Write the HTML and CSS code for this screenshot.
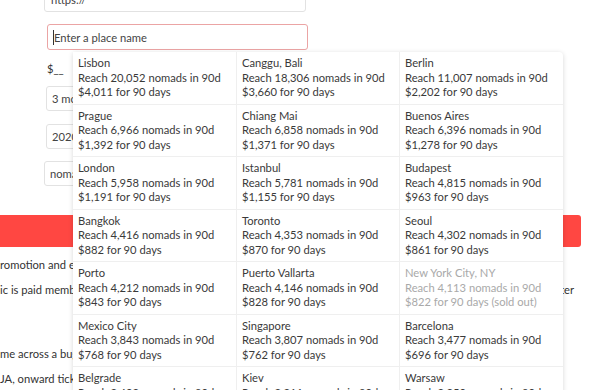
FILE: index.html
```html
<!DOCTYPE html>
<html>
<head>
<meta charset="utf-8">
<link rel="stylesheet" href="styles.css">
</head>
<body>
<div class="page">
  <div class="form">
    <div class="field url-input">https://</div>
    <div class="place-wrap">
      <div class="field place-input"><span class="caret"></span>Enter a place name</div>
      <div class="dropdown">
        <div class="cell"><div>Lisbon</div><div>Reach 20,052 nomads in 90d</div><div>$4,011 for 90 days</div></div>
        <div class="cell"><div>Canggu, Bali</div><div>Reach 18,306 nomads in 90d</div><div>$3,660 for 90 days</div></div>
        <div class="cell"><div>Berlin</div><div>Reach 11,007 nomads in 90d</div><div>$2,202 for 90 days</div></div>
        <div class="cell"><div>Prague</div><div>Reach 6,966 nomads in 90d</div><div>$1,392 for 90 days</div></div>
        <div class="cell"><div>Chiang Mai</div><div>Reach 6,858 nomads in 90d</div><div>$1,371 for 90 days</div></div>
        <div class="cell"><div>Buenos Aires</div><div>Reach 6,396 nomads in 90d</div><div>$1,278 for 90 days</div></div>
        <div class="cell"><div>London</div><div>Reach 5,958 nomads in 90d</div><div>$1,191 for 90 days</div></div>
        <div class="cell"><div>Istanbul</div><div>Reach 5,781 nomads in 90d</div><div>$1,155 for 90 days</div></div>
        <div class="cell"><div>Budapest</div><div>Reach 4,815 nomads in 90d</div><div>$963 for 90 days</div></div>
        <div class="cell"><div>Bangkok</div><div>Reach 4,416 nomads in 90d</div><div>$882 for 90 days</div></div>
        <div class="cell"><div>Toronto</div><div>Reach 4,353 nomads in 90d</div><div>$870 for 90 days</div></div>
        <div class="cell"><div>Seoul</div><div>Reach 4,302 nomads in 90d</div><div>$861 for 90 days</div></div>
        <div class="cell"><div>Porto</div><div>Reach 4,212 nomads in 90d</div><div>$843 for 90 days</div></div>
        <div class="cell"><div>Puerto Vallarta</div><div>Reach 4,146 nomads in 90d</div><div>$828 for 90 days</div></div>
        <div class="cell sold"><div>New York City, NY</div><div>Reach 4,113 nomads in 90d</div><div>$822 for 90 days (sold out)</div></div>
        <div class="cell"><div>Mexico City</div><div>Reach 3,843 nomads in 90d</div><div>$768 for 90 days</div></div>
        <div class="cell"><div>Singapore</div><div>Reach 3,807 nomads in 90d</div><div>$762 for 90 days</div></div>
        <div class="cell"><div>Barcelona</div><div>Reach 3,477 nomads in 90d</div><div>$696 for 90 days</div></div>
        <div class="cell"><div>Belgrade</div><div>Reach 3,402 nomads in 90d</div><div>$680 for 90 days</div></div>
        <div class="cell"><div>Kiev</div><div>Reach 3,311 nomads in 90d</div><div>$662 for 90 days</div></div>
        <div class="cell"><div>Warsaw</div><div>Reach 3,250 nomads in 90d</div><div>$650 for 90 days</div></div>
      </div>
    </div>
    <div class="price">$__</div>
    <div class="field select s1">3 months</div>
    <div class="field select s2">2020-01-01</div>
    <div class="field select s3">nomads</div>
  </div>
  <div class="buy-btn"></div>
  <div class="notes">
    <div class="line">romotion and email newsletter</div>
    <div class="line split"><span>ic is paid members only</span><span>newsletter</span></div>
    <div class="line gap">me across a bug</div>
    <div class="line">JA, onward ticket</div>
  </div>
</div>
</body>
</html>
```

FILE: styles.css
```css
html, body {
  margin: 0;
  padding: 0;
  background: #fff;
}
body {
  font-family: Lato, "Noto Sans", sans-serif;
  font-size: 11.2px;
  color: #333;
  overflow: hidden;
  height: 390px;
}
.page {
  margin-top: -14px;
}
.form {
  padding-left: 44px;
  display: flex;
  flex-direction: column;
  align-items: flex-start;
}
.field {
  box-sizing: border-box;
  border: 1px solid #e2e2e2;
  border-radius: 3px;
  background: #fff;
  display: flex;
  align-items: center;
}
.url-input {
  width: 262px;
  height: 26px;
  padding-left: 6px;
  color: #444;
}
.place-wrap {
  position: relative;
  margin-top: 12px;
  margin-left: 3px;
}
.place-input {
  width: 261px;
  height: 26px;
  border-color: #eba4a4;
  padding-left: 5px;
  color: #444;
}
.caret {
  width: 1px;
  height: 15px;
  background: #333;
}
.dropdown {
  position: absolute;
  z-index: 5;
  left: 26px;
  top: 28px;
  width: 490px;
  background: #fff;
  border-radius: 0 4px 4px 4px;
  box-shadow: 0 1px 5px rgba(0, 0, 0, 0.16);
  display: grid;
  grid-template-columns: 164px 163px 163px;
}
.cell {
  padding: 4px 5px 4px 5px;
  line-height: 14.5px;
  border-bottom: 1px solid #efefef;
  border-right: 1px solid #efefef;
  white-space: nowrap;
  color: #3a3a3a;
}
.cell:nth-child(3n) {
  border-right: none;
}
.cell.sold {
  color: #a9a9a9;
}
.price {
  margin-top: 12px;
  margin-left: 3px;
  line-height: 14px;
}
.select {
  height: 25px;
  width: 80px;
  padding-left: 5px;
  color: #444;
}
.s1 {
  margin-top: 10px;
  margin-left: 2px;
}
.s2 {
  margin-top: 13px;
  margin-left: 2px;
}
.s3 {
  margin-top: 12px;
}
.buy-btn {
  margin-top: 29px;
  width: 581px;
  height: 32px;
  background: #ff4742;
  border-radius: 0 3px 3px 0;
}
.notes {
  margin-top: 5px;
  width: 574px;
}
.line {
  line-height: 25px;
  white-space: nowrap;
  color: #333;
}
.split {
  display: flex;
  justify-content: space-between;
}
.gap {
  margin-top: 39px;
}
```
